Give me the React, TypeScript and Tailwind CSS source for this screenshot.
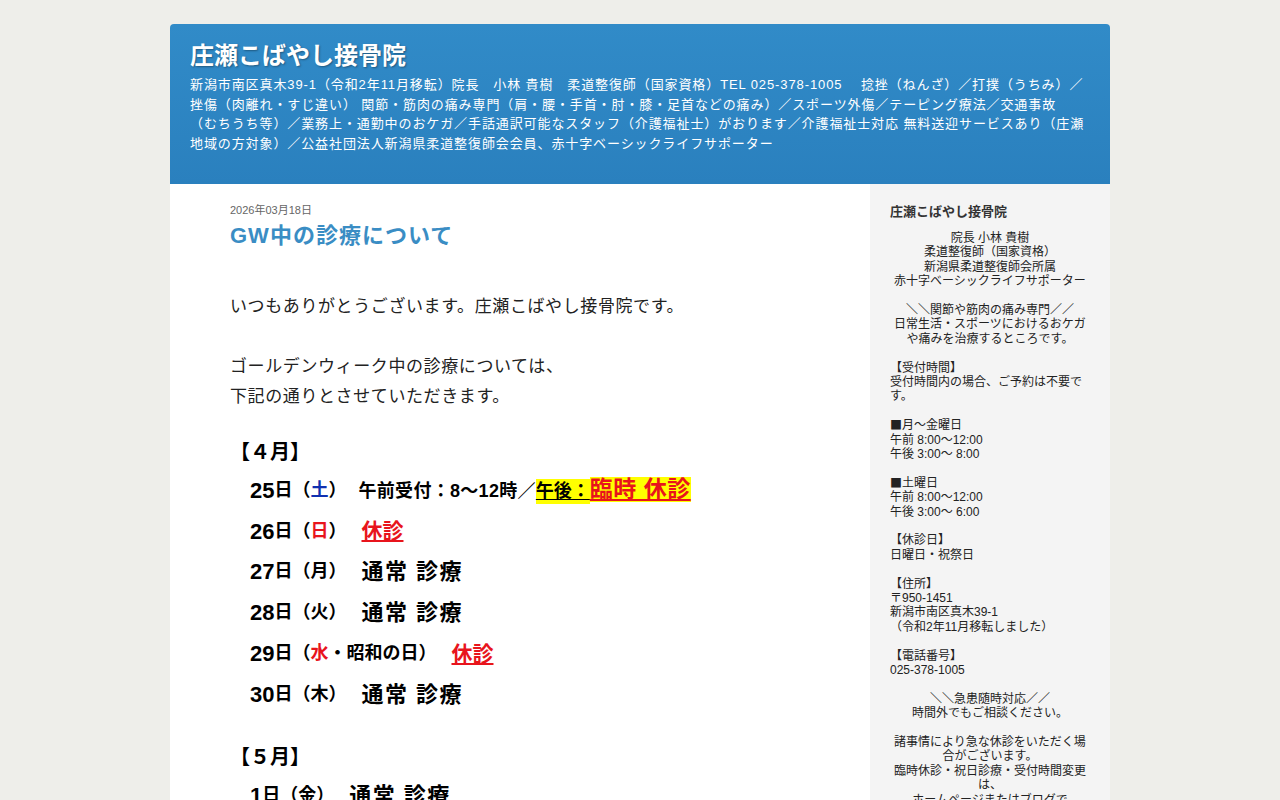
import React from "react";

const FONT = { fontFamily: '"Liberation Sans", Arial, "Noto Sans CJK JP", sans-serif' };
const CJK = { fontFamily: '"Noto Sans CJK JP", sans-serif' };

// 4月の診療日程
type Row = { day: string; week: React.ReactNode; body: React.ReactNode };

const Kyushin = ({ className = "" }: { className?: string }) => (
  <span className={"text-[21px] font-bold text-[#e8141c] underline underline-offset-2 " + className}>休診</span>
);

const Tsujo = () => <span className="text-[22px] font-bold tracking-[1.5px]">通常 診療</span>;

const aprilRows: Row[] = [
  {
    day: "25",
    week: <span className="text-[#1030b0]">土</span>,
    body: (
      <span className="ml-[12px] inline-flex items-baseline">
        <span className="text-[18px] font-bold tracking-[0.3px]">
          午前受付：8<span style={CJK}>〜</span>12時／
        </span>
        <span className="bg-[#ffff00] text-[18px] font-bold leading-[25px] underline underline-offset-2">午後：</span>
        <span className="bg-[#ffff00] text-[23px] font-bold leading-[25px] tracking-[0.5px] text-[#e8141c] underline underline-offset-2">
          臨時 休診
        </span>
      </span>
    ),
  },
  { day: "26", week: <span className="text-[#e8141c]">日</span>, body: <Kyushin className="ml-[15px]" /> },
  { day: "27", week: "月", body: <span className="ml-[15px]"><Tsujo /></span> },
  { day: "28", week: "火", body: <span className="ml-[15px]"><Tsujo /></span> },
  {
    day: "29",
    week: <><span className="text-[#e8141c]">水</span>・昭和の日</>,
    body: <Kyushin className="ml-[15px]" />,
  },
  { day: "30", week: "木", body: <span className="ml-[15px]"><Tsujo /></span> },
];

const headerLines = [
  "新潟市南区真木39-1（令和2年11月移転）院長　小林 貴樹　柔道整復師（国家資格）TEL 025-378-1005　 捻挫（ねんざ）／打撲（うちみ）／",
  "挫傷（肉離れ・すじ違い） 関節・筋肉の痛み専門（肩・腰・手首・肘・膝・足首などの痛み）／スポーツ外傷／テーピング療法／交通事故",
  "（むちうち等）／業務上・通勤中のおケガ／手話通訳可能なスタッフ（介護福祉士）がおります／介護福祉士対応 無料送迎サービスあり（庄瀬",
  "地域の方対象）／公益社団法人新潟県柔道整復師会会員、赤十字ベーシックライフサポーター",
];

const sideLines: { text: string; center?: boolean }[][] = [
  [
    { text: "院長 小林 貴樹", center: true },
    { text: "柔道整復師（国家資格）", center: true },
    { text: "新潟県柔道整復師会所属", center: true },
    { text: "赤十字ベーシックライフサポーター", center: true },
  ],
  [
    { text: "＼＼関節や筋肉の痛み専門／／", center: true },
    { text: "日常生活・スポーツにおけるおケガや痛みを治療するところです。", center: true },
  ],
  [{ text: "【受付時間】" }, { text: "受付時間内の場合、ご予約は不要です。" }],
  [{ text: "■月～金曜日" }, { text: "午前 8:00～12:00" }, { text: "午後 3:00～ 8:00" }],
  [{ text: "■土曜日" }, { text: "午前 8:00～12:00" }, { text: "午後 3:00～ 6:00" }],
  [{ text: "【休診日】" }, { text: "日曜日・祝祭日" }],
  [{ text: "【住所】" }, { text: "〒950-1451" }, { text: "新潟市南区真木39-1" }, { text: "（令和2年11月移転しました）" }],
  [{ text: "【電話番号】" }, { text: "025-378-1005" }],
  [
    { text: "＼＼急患随時対応／／", center: true },
    { text: "時間外でもご相談ください。", center: true },
  ],
  [
    { text: "諸事情により急な休診をいただく場合がございます。", center: true },
    { text: "臨時休診・祝日診療・受付時間変更は、", center: true },
    { text: "ホームページまたはブログで", center: true },
    { text: "お知らせいたします。", center: true },
  ],
];

// ■ は全角で表示する（行の高さは変えない）
const renderSide = (t: string) =>
  t.split(/(■)/).map((part, k) =>
    part === "■" ? (
      <span key={k} className="inline-block h-[14.4px] align-top leading-[14.4px]" style={CJK}>
        {part}
      </span>
    ) : (
      part
    )
  );

export default function App() {
  return (
    <div className="min-h-screen bg-[#eeeeea] pt-6" style={FONT}>
      <div className="mx-auto w-[940px]">
        {/* Header */}
        <header className="h-[160px] rounded-t-[4px] bg-linear-to-b from-[#318bc8] to-[#2a80be] px-5 pt-[17px] text-white">
          <h1 className="text-[24px] font-bold leading-[30px] [text-shadow:1px_1px_2px_rgba(0,0,0,0.35)]">
            庄瀬こばやし接骨院
          </h1>
          <div className="mt-[4px] text-[13px] leading-[19.5px] tracking-[0.9px]">
            {headerLines.map((l, i) => (
              <p key={i} className="whitespace-nowrap">
                {l}
              </p>
            ))}
          </div>
        </header>

        <div className="flex">
          {/* Main article */}
          <main className="w-[700px] bg-white pl-[60px] pr-10 pt-[19px] pb-10 text-[#222]">
            <div className="text-[11px] leading-[14px] text-[#666]">2026年03月18日</div>
            <h2 className="mt-[5px] text-[22px] font-bold leading-[28px] tracking-[1px] text-[#3a8dc4]">
              GW中の診療について
            </h2>

            <div className="mt-[42px] text-[17px] leading-[30px] tracking-[0.6px]">
              <p>いつもありがとうございます。庄瀬こばやし接骨院です。</p>
              <p className="mt-[30px]">ゴールデンウィーク中の診療については、</p>
              <p>下記の通りとさせていただきます。</p>
            </div>

            <div className="mt-[25px] text-black">
              <div className="text-[20px] font-bold leading-[30px]">【４月】</div>
              <div className="mt-[3px]">
                {aprilRows.map((r) => (
                  <div key={r.day} className="flex h-[40.8px] items-center pl-[20px] font-bold">
                    <span className="text-[22px]">{r.day}</span>
                    <span className="text-[18px]">日（{r.week}）</span>
                    {r.body}
                  </div>
                ))}
              </div>

              <div className="mt-[27px] text-[20px] font-bold leading-[30px]">【５月】</div>
              <div className="mt-[3px] flex h-[40.8px] items-center pl-[20px] font-bold">
                <span className="text-[22px]">1</span>
                <span className="text-[18px]">日（金）</span>
                <span className="ml-[15px]"><Tsujo /></span>
              </div>
            </div>
          </main>

          {/* Sidebar */}
          <aside className="w-[240px] bg-[#f4f4f4] px-5 pt-[20px] text-[#222]">
            <h3 className="text-[13px] font-bold leading-[16px] text-[#333]">庄瀬こばやし接骨院</h3>
            <div className="mt-[11px] text-[12px] leading-[14.4px]">
              {sideLines.map((block, i) => (
                <div key={i} className={i > 0 ? "mt-[14.4px]" : ""}>
                  {block.map((l, j) => (
                    <p key={j} className={l.center ? "text-center" : ""}>
                      {renderSide(l.text)}
                    </p>
                  ))}
                </div>
              ))}
            </div>
          </aside>
        </div>
      </div>
    </div>
  );
}
